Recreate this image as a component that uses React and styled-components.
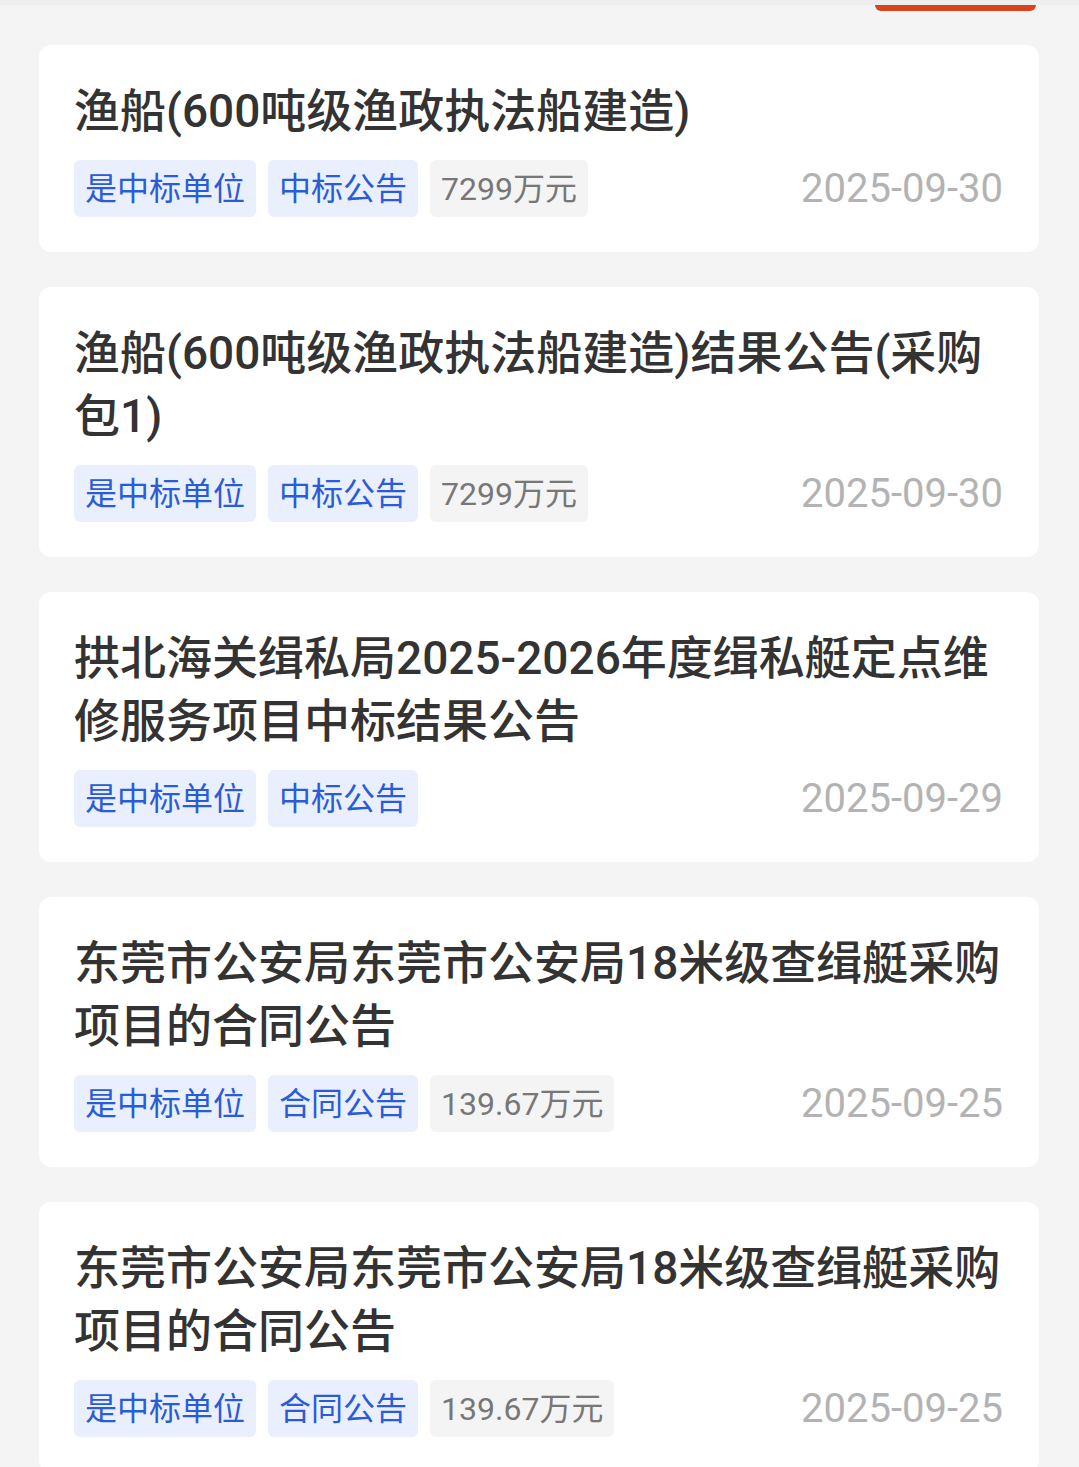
import React from "react";
import styled, { createGlobalStyle } from "styled-components";

const GlobalStyle = createGlobalStyle`
  html, body {
    margin: 0;
    padding: 0;
    background: #f4f4f4;
  }
  body {
    font-family: Roboto, "Noto Sans CJK SC", sans-serif;
  }
`;

const items = [
  {
    id: 1,
    title: "渔船(600吨级渔政执法船建造)",
    type: "中标公告",
    amount: "7299万元",
    date: "2025-09-30",
  },
  {
    id: 2,
    title: "渔船(600吨级渔政执法船建造)结果公告(采购包1)",
    type: "中标公告",
    amount: "7299万元",
    date: "2025-09-30",
  },
  {
    id: 3,
    title: "拱北海关缉私局2025-2026年度缉私艇定点维修服务项目中标结果公告",
    type: "中标公告",
    amount: null,
    date: "2025-09-29",
  },
  {
    id: 4,
    title: "东莞市公安局东莞市公安局18米级查缉艇采购项目的合同公告",
    type: "合同公告",
    amount: "139.67万元",
    date: "2025-09-25",
  },
  {
    id: 5,
    title: "东莞市公安局东莞市公安局18米级查缉艇采购项目的合同公告",
    type: "合同公告",
    amount: "139.67万元",
    date: "2025-09-25",
  },
];

const App = () => {
  return (
    <Page>
      <GlobalStyle />
      <TopEdge />
      <TabStrip>
        <TabIndicator />
      </TabStrip>
      <List>
        {items.map((it) => (
          <Card key={it.id}>
            <Title>{it.title}</Title>
            <MetaRow>
              <Tags>
                <Tag>是中标单位</Tag>
                <Tag>{it.type}</Tag>
                {it.amount && <Tag $muted>{it.amount}</Tag>}
              </Tags>
              <DateText>{it.date}</DateText>
            </MetaRow>
          </Card>
        ))}
      </List>
    </Page>
  );
};

const Page = styled.div`
  background: #f4f4f4;
  min-height: 1467px;
  overflow: hidden;
`;

const TopEdge = styled.div`
  height: 5px;
  background: #eeeeee;
`;

// bottom of the active tab's underline peeking in from above
const TabStrip = styled.div`
  display: flex;
  justify-content: flex-end;
  padding-right: 43px;
`;

const TabIndicator = styled.div`
  width: 161px;
  height: 6px;
  background: #d9441f;
  border-radius: 0 0 6px 6px;
`;

const List = styled.div`
  display: flex;
  flex-direction: column;
  gap: 35px;
  padding: 34px 40px 0 39px;
`;

const Card = styled.div`
  background: #ffffff;
  border-radius: 12px;
  padding: 35px 36px 35px 35px;
`;

const Title = styled.div`
  font-size: 46px;
  line-height: 63px;
  font-weight: 500;
  color: #333333;
  word-break: break-all;
`;

const MetaRow = styled.div`
  display: flex;
  align-items: center;
  justify-content: space-between;
  margin-top: 17px;
`;

const Tags = styled.div`
  display: flex;
  gap: 12px;
`;

const Tag = styled.span`
  display: inline-flex;
  align-items: center;
  height: 57px;
  padding: 0 11px;
  border-radius: 6px;
  font-size: 32px;
  line-height: 1;
  background: ${(p) => (p.$muted ? "#f4f4f4" : "#e9effd")};
  color: ${(p) => (p.$muted ? "#777777" : "#2b5cd8")};
`;

const DateText = styled.span`
  font-size: 40px;
  color: #b3b3b3;
`;

export default App;
